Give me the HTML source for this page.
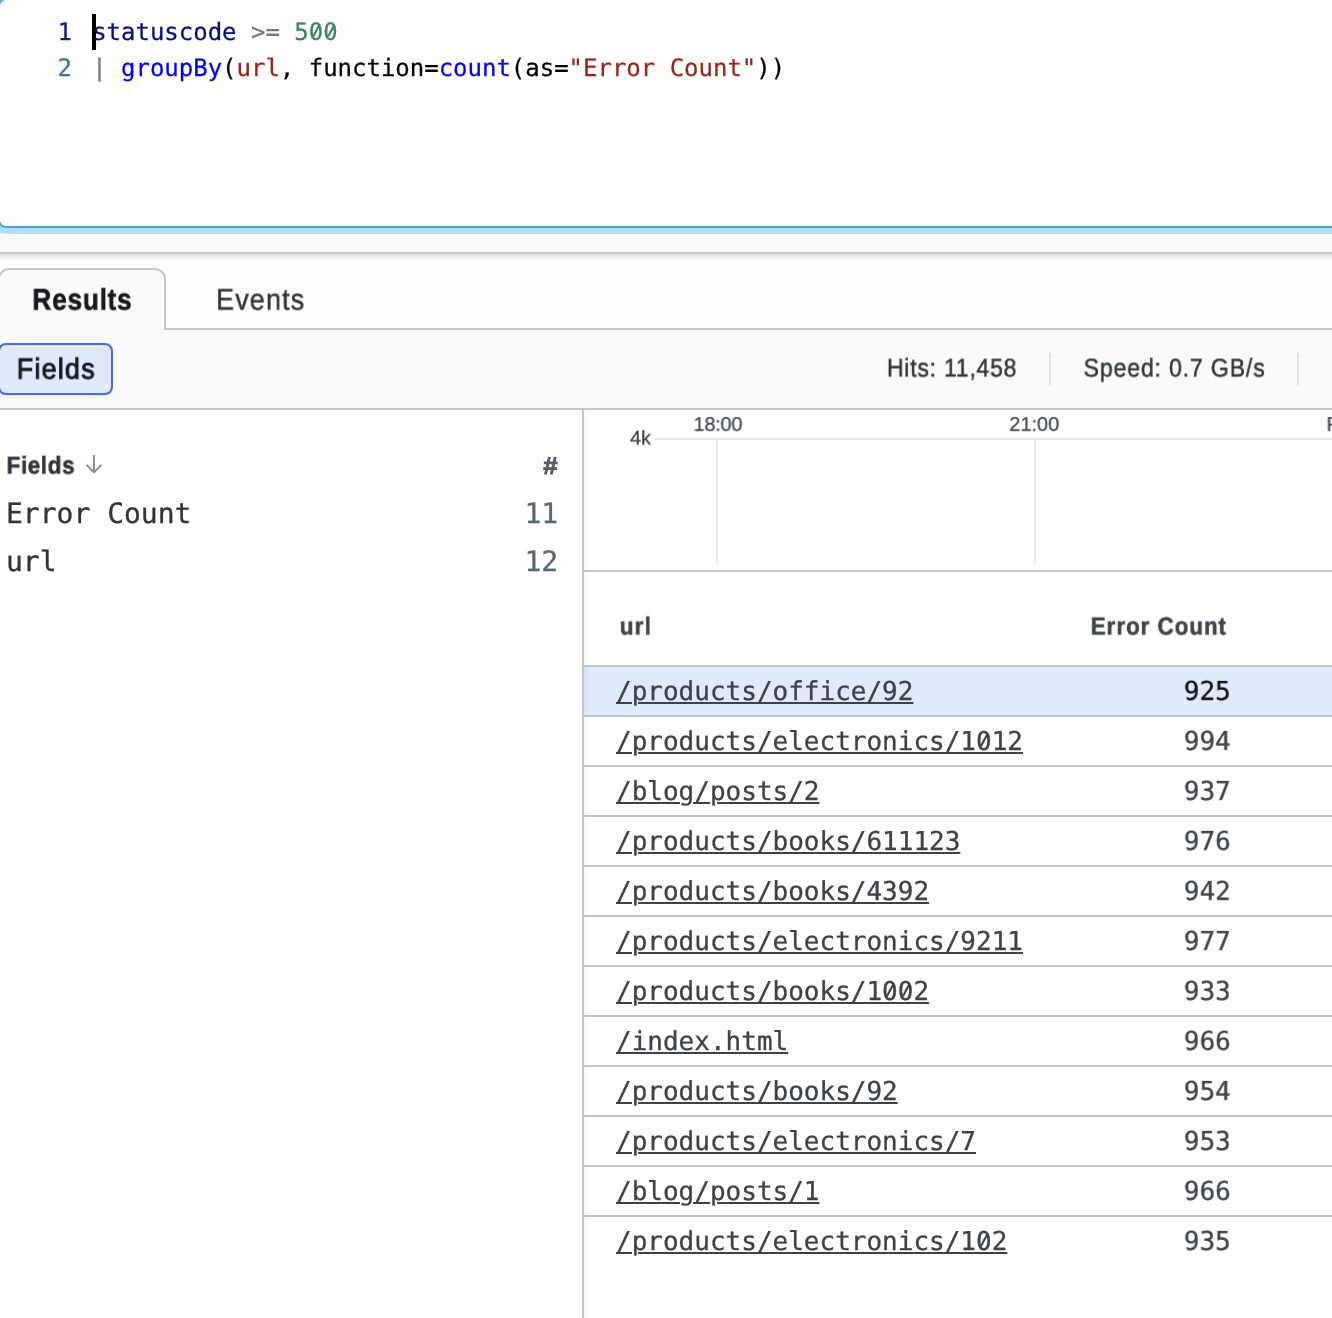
<!DOCTYPE html>
<html lang="en">
<head>
<meta charset="utf-8">
<title>Search</title>
<style>
html,body{margin:0;padding:0;}
html{overflow:hidden;background:#fff;}
body{width:1332px;height:1318px;overflow:hidden;position:relative;background:#fff;font-family:"Liberation Sans",sans-serif;color:#2e343c;}
*{box-sizing:border-box;}
.abs{position:absolute;white-space:pre;will-change:transform;text-rendering:geometricPrecision;}
/* query editor */
#band{position:absolute;left:-20px;top:0;width:1372px;height:254px;background:#fafafa;border-bottom:2px solid #c3c6cb;box-shadow:0 2px 5px rgba(0,0,0,.16);}
#editor{position:absolute;left:-2px;top:-2px;width:1400px;height:230px;background:#fffffe;border:2px solid #49a5dc;border-radius:8px;box-shadow:0 0 0 6px #afdff7;}
.code{position:absolute;white-space:pre;will-change:transform;text-rendering:geometricPrecision;-webkit-text-stroke:0.25px currentColor;font-family:"DejaVu Sans Mono","Liberation Mono",monospace;font-size:24px;line-height:36px;height:36px;color:#000;}
.ln{color:#3d7690;transform:translateX(0.5px);}
.ln.act{color:#11206b;}
.v{color:#03107b;}.o{color:#777;}.n{color:#3c845c;}.f{color:#0000f5;}.s{color:#95261f;}
#cursor{position:absolute;left:92px;top:14px;width:4px;height:36px;background:#000;}
/* tabs */
#tabs{position:absolute;left:0;top:250px;width:1332px;height:80px;background:#fefefe;border-bottom:2px solid #c3c6cb;}
#tab1{position:absolute;left:-2px;top:268px;width:168px;height:62px;background:#fafafa;border:2px solid #c3c6cb;border-bottom:none;border-radius:11px 11px 0 0;}
/* toolbar */
#toolbar{position:absolute;left:0;top:330px;width:1332px;height:80px;background:#fafafa;border-bottom:2px solid #c3c6cb;}
#fbtn{position:absolute;left:-2px;top:343px;width:115px;height:52px;background:#e1e9fd;border:2px solid #4a6bdc;border-radius:8px;box-shadow:0 2px 3px rgba(0,0,0,.08);}
.sep{position:absolute;width:2px;top:353px;height:32px;background:#e0e2e5;}
/* panels */
#left{position:absolute;left:0;top:410px;width:582px;height:908px;background:#fff;}
#vdiv{position:absolute;left:582px;top:410px;width:2px;height:908px;background:#c1c4c9;}
#vsh{position:absolute;left:584px;top:410px;width:7px;height:908px;background:linear-gradient(to right,rgba(0,0,0,.03),rgba(0,0,0,0));}
#right{position:absolute;left:584px;top:410px;width:748px;height:908px;background:#fff;}
.z{position:absolute;top:var(--hl,0px);width:0;height:0;}
.z::before{content:"";position:absolute;left:0.236em;top:0.555em;width:0.18em;height:0.28em;margin-top:-0.14em;background:#fff;border-radius:50%;}
.z::after{content:"";position:absolute;left:0.276em;top:0.535em;width:0.08em;height:0.5em;margin-top:-0.25em;background:currentColor;transform:rotate(28deg);}
.mono{-webkit-text-stroke:0.3px currentColor;font-family:"DejaVu Sans Mono","Liberation Mono",monospace;}
.m28{font-size:28px;line-height:34px;height:34px;}
.m26{font-size:26px;line-height:32px;height:32px;}
.hl{position:absolute;left:584px;width:748px;height:2px;background:#c3c6cb;}
.row1{position:absolute;left:584px;top:667px;width:748px;height:48px;background:#e1e9fc;}
.u{transform:translate(0px,1px) scale(0.999,1);transform-origin:0 0;text-decoration:underline;text-decoration-thickness:2.3px;text-underline-offset:1.75px;color:#3d4249;}
.num{color:#3d4249;transform:translate(-0.2px,0.85px) scale(0.999,1);transform-origin:0 0;}
.num.first{color:#111;}
</style>
</head>
<body>
<div id="tabs"></div>
<div id="band"></div>
<div id="editor"></div>
<div id="cursor"></div>
<div id="ln1" class="code ln act" style="left:57px;top:14px;">1</div>
<div id="ln2" class="code ln" style="left:57px;top:50px;">2</div>
<div id="c1" class="code" style="left:92px;top:14px;transform:translateX(0.15px);letter-spacing:-0.012px;"><span class="v">statuscode</span> <span class="o">&gt;=</span> <span class="n">500</span><i class="z n" style="left:calc(15 * 0.60205em - 0.18px);--hl:4.03px"></i><i class="z n" style="left:calc(16 * 0.60205em - 0.19px);--hl:4.03px"></i></div>
<div id="c2" class="code" style="left:92px;top:50px;transform:translateX(0.15px);letter-spacing:-0.012px;"><span class="o">|</span> <span class="f">groupBy</span>(<span class="s">url</span>, function=<span class="f">count</span>(as=<span class="s">"Error Count"</span>))</div>

<div id="tab1"></div>
<div id="t_results" class="abs" style="left:32px;top:282px;font-size:28px;line-height:35px;height:35px;font-weight:bold;color:#16181c;-webkit-text-stroke:0.6px #16181c;transform:translate(0.45px,0.59px) scale(0.93,1.0722);transform-origin:0 27.20px;letter-spacing:0.923px;">Results</div>
<div id="t_events" class="abs" style="left:216px;top:282px;font-size:28px;line-height:35px;height:35px;font-weight:normal;color:#2e343c;-webkit-text-stroke:0.45px #2e343c;transform:translate(0.10px,0.32px) scale(0.96,1.0640);transform-origin:0 27.20px;letter-spacing:1.209px;">Events</div>

<div id="toolbar"></div>
<div id="fbtn"></div>
<div id="t_fbtn" class="abs" style="left:16px;top:351px;font-size:28px;line-height:35px;height:35px;font-weight:normal;color:#16181c;-webkit-text-stroke:0.95px #16181c;transform:translate(0.70px,0.63px) scale(0.96,1.0372);transform-origin:0 27.20px;letter-spacing:1.290px;">Fields</div>
<div id="t_hits" class="abs" style="left:886px;top:354px;font-size:24px;line-height:30px;height:30px;font-weight:normal;color:#2e343c;-webkit-text-stroke:0.45px #2e343c;transform:translate(0.92px,1.00px) scale(0.96,1.0648);transform-origin:0 23.32px;letter-spacing:0.788px;">Hits: 11,458</div>
<div class="sep" style="left:1049px;"></div>
<div id="t_speed" class="abs" style="left:1083px;top:354px;font-size:24px;line-height:30px;height:30px;font-weight:normal;color:#2e343c;-webkit-text-stroke:0.45px #2e343c;transform:translate(0.58px,1.00px) scale(0.96,1.0648);transform-origin:0 23.32px;letter-spacing:0.895px;">Speed: 0.7 GB/s</div>
<div class="sep" style="left:1297px;"></div>

<div id="left"></div>
<div id="right"></div>
<div id="vdiv"></div>

<div id="t_fields" class="abs" style="left:6px;top:451px;font-size:24px;line-height:30px;height:30px;font-weight:bold;color:#2e343c;-webkit-text-stroke:0.6px #2e343c;transform:translate(0.58px,0.99px) scale(0.93,1.0188);transform-origin:0 23.32px;letter-spacing:0.732px;">Fields</div>
<svg id="arrow" class="abs" style="left:84px;top:453px;" width="20" height="22" viewBox="0 0 20 22"><path d="M9.95 2V19.4M2.5 11.9L9.95 19.4L17.4 11.9" fill="none" stroke="#868e9c" stroke-width="2"/></svg>
<div id="t_hash" class="abs" style="left:543px;top:451px;font-size:24px;line-height:30px;height:30px;font-weight:bold;color:#575d68;-webkit-text-stroke:0.9px #575d68;transform:translate(0.21px,0.99px) scale(1.0718,1.0188);transform-origin:0 23.32px;">#</div>
<div id="f1" class="abs mono m28" style="left:6px;top:497px;color:#2e343c;">Error Count</div>
<div id="f1n" class="abs mono m28" style="left:524px;top:497px;color:#5c6575;transform:translateX(0.4px);">11</div>
<div id="f2" class="abs mono m28" style="left:6px;top:545px;color:#2e343c;">url</div>
<div id="f2n" class="abs mono m28" style="left:524px;top:545px;color:#5c6575;transform:translateX(0.4px);">12</div>

<!-- chart -->
<div id="t_4k" class="abs" style="left:630px;top:426px;font-size:20px;line-height:25px;height:25px;font-weight:normal;color:#3e444c;-webkit-text-stroke:0.25px #3e444c;transform:translate(0.01px,0.54px) scale(0.998,0.9947);transform-origin:0 19.43px;letter-spacing:-0.198px;">4k</div>
<div id="t_1800" class="abs" style="left:693px;top:412px;font-size:20px;line-height:25px;height:25px;font-weight:normal;color:#3e444c;-webkit-text-stroke:0.25px #3e444c;transform:translate(0.46px,0.73px) scale(0.998,0.9890);transform-origin:0 19.43px;letter-spacing:-0.235px;">18:00</div>
<div id="t_2100" class="abs" style="left:1009px;top:412px;font-size:20px;line-height:25px;height:25px;font-weight:normal;color:#3e444c;-webkit-text-stroke:0.25px #3e444c;transform:translate(0.24px,0.73px) scale(0.998,0.9890);transform-origin:0 19.43px;letter-spacing:0.012px;">21:00</div>
<div id="t_fri" class="abs" style="left:1326px;top:412px;font-size:20px;line-height:25px;height:25px;font-weight:normal;color:#3e444c;-webkit-text-stroke:0.25px #3e444c;transform:translate(0.50px,0.73px) scale(0.998,0.9890);transform-origin:0 19.43px;">Fri</div>
<div style="position:absolute;left:655px;top:438px;width:677px;height:2px;background:#dfe1e5;"></div>
<div style="position:absolute;left:716px;top:440px;width:2px;height:123px;background:#e9e9e9;"></div>
<div style="position:absolute;left:1034px;top:440px;width:2px;height:123px;background:#e9e9e9;"></div>
<div class="hl" style="top:570px;"></div>

<!-- table -->
<div id="t_hurl" class="abs" style="left:619px;top:612px;font-size:24px;line-height:30px;height:30px;font-weight:bold;color:#3e444c;-webkit-text-stroke:0.6px #3e444c;transform:translate(0.83px,0.18px) scale(0.93,1.0284);transform-origin:0 23.32px;letter-spacing:1.397px;">url</div>
<div id="t_herr" class="abs" style="left:1090px;top:612px;font-size:24px;line-height:30px;height:30px;font-weight:bold;color:#3e444c;-webkit-text-stroke:0.6px #3e444c;transform:translate(0.78px,0.18px) scale(0.93,1.0284);transform-origin:0 23.32px;letter-spacing:1.069px;">Error Count</div>
<div class="hl" style="top:665px;"></div>
<div class="row1"></div>
<div id="r0u" class="abs mono m26 u" style="left:616px;top:675px;">/products/office/92</div>
<div id="r0n" class="abs mono m26 num first" style="left:1184px;top:675px;">925</div>
<div class="hl" style="top:715px;"></div>
<div id="r1u" class="abs mono m26 u" style="left:616px;top:725px;">/products/electronics/1012<i class="z" style="left:13.8471em;--hl:0.87px"></i></div>
<div id="r1n" class="abs mono m26 num" style="left:1184px;top:725px;">994</div>
<div class="hl" style="top:765px;"></div>
<div id="r2u" class="abs mono m26 u" style="left:616px;top:775px;">/blog/posts/2</div>
<div id="r2n" class="abs mono m26 num" style="left:1184px;top:775px;">937</div>
<div class="hl" style="top:815px;"></div>
<div id="r3u" class="abs mono m26 u" style="left:616px;top:825px;">/products/books/611123</div>
<div id="r3n" class="abs mono m26 num" style="left:1184px;top:825px;">976</div>
<div class="hl" style="top:865px;"></div>
<div id="r4u" class="abs mono m26 u" style="left:616px;top:875px;">/products/books/4392</div>
<div id="r4n" class="abs mono m26 num" style="left:1184px;top:875px;">942</div>
<div class="hl" style="top:915px;"></div>
<div id="r5u" class="abs mono m26 u" style="left:616px;top:925px;">/products/electronics/9211</div>
<div id="r5n" class="abs mono m26 num" style="left:1184px;top:925px;">977</div>
<div class="hl" style="top:965px;"></div>
<div id="r6u" class="abs mono m26 u" style="left:616px;top:975px;">/products/books/1002<i class="z" style="left:10.2348em;--hl:0.87px"></i><i class="z" style="left:10.8369em;--hl:0.87px"></i></div>
<div id="r6n" class="abs mono m26 num" style="left:1184px;top:975px;">933</div>
<div class="hl" style="top:1015px;"></div>
<div id="r7u" class="abs mono m26 u" style="left:616px;top:1025px;">/index.html</div>
<div id="r7n" class="abs mono m26 num" style="left:1184px;top:1025px;">966</div>
<div class="hl" style="top:1065px;"></div>
<div id="r8u" class="abs mono m26 u" style="left:616px;top:1075px;">/products/books/92</div>
<div id="r8n" class="abs mono m26 num" style="left:1184px;top:1075px;">954</div>
<div class="hl" style="top:1115px;"></div>
<div id="r9u" class="abs mono m26 u" style="left:616px;top:1125px;">/products/electronics/7</div>
<div id="r9n" class="abs mono m26 num" style="left:1184px;top:1125px;">953</div>
<div class="hl" style="top:1165px;"></div>
<div id="r10u" class="abs mono m26 u" style="left:616px;top:1175px;">/blog/posts/1</div>
<div id="r10n" class="abs mono m26 num" style="left:1184px;top:1175px;">966</div>
<div class="hl" style="top:1215px;"></div>
<div id="r11u" class="abs mono m26 u" style="left:616px;top:1225px;">/products/electronics/102<i class="z" style="left:13.8471em;--hl:0.87px"></i></div>
<div id="r11n" class="abs mono m26 num" style="left:1184px;top:1225px;">935</div>
<div id="vsh"></div>
</body>
</html>
